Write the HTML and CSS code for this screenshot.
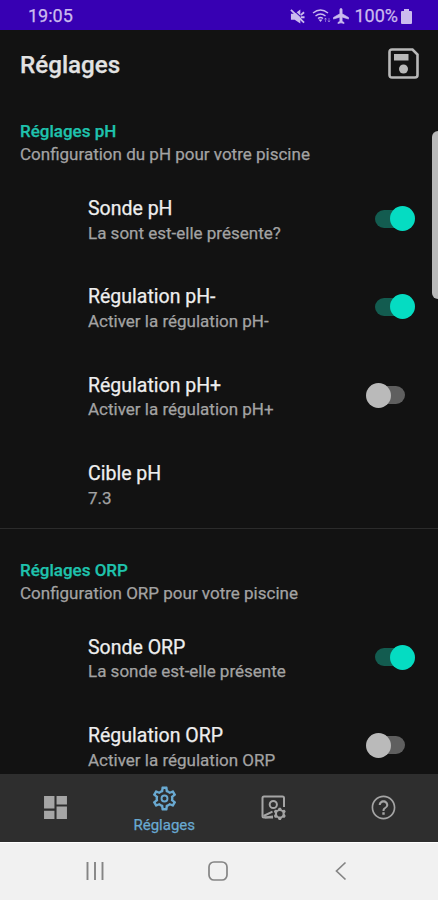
FILE: index.html
```html
<!DOCTYPE html>
<html lang="fr">
<head>
<meta charset="utf-8">
<title>Réglages</title>
<link rel="stylesheet" href="styles.css">
</head>
<body>
<div class="screen">
  <div class="status">
    <span class="clock">19:05</span>
    <div class="status-icons">
      <svg class="mute" viewBox="0 0 16 16"><path d="M1 5h4l6-4.500v15L5 11.500H1z" fill="currentColor"/><path d="M3.500 1l13 12" stroke="#3700b3" stroke-width="1.200"/><path d="M1 1l14 13.500M11.500 6.500l3.500-3M11.500 8.800h4" stroke="currentColor" stroke-width="2"/></svg>
      <svg class="wifi" viewBox="0 0 20 16"><path d="M1 5q7.500-6 15 0M3.500 8q5-4 10 0M6 10.500q2.500-2 5 0" fill="none" stroke="currentColor" stroke-width="1.400"/><path d="M6.500 11.500h4L8.500 14z" fill="currentColor"/><path d="M13.500 14v-4m-1 1.500l1-1.500 1 1.500M17 10v4m-1-1.500l1 1.500 1-1.500" fill="none" stroke="currentColor" stroke-width=".8" opacity=".6"/></svg>
      <svg class="plane" viewBox="2 1.500 20 21"><path fill="currentColor" stroke="currentColor" stroke-width=".8" d="M22 16v-2l-8.500-5V3.500C13.500 2.670 12.830 2 12 2s-1.500.67-1.500 1.500V9L2 14v2l8.500-2.500V19L8 20.500V22l4-1 4 1v-1.500L13.500 19v-5.500L22 16z"/></svg>
      <span class="percent">100%</span>
      <svg class="battery" viewBox="0 0 11 15"><path d="M3 0h5v2h2q1 0 1 1v11q0 1-1 1H1q-1 0-1-1V3q0-1 1-1h2z" fill="currentColor"/></svg>
    </div>
  </div>
  <header class="appbar">
    <h1>Réglages</h1>
    <svg class="save" viewBox="0 0 31 31"><path d="M4 1.500h20.500l5 5V27q0 2.500-2.500 2.500H4Q1.500 29.500 1.500 27V4Q1.500 1.500 4 1.500z" fill="none" stroke="currentColor" stroke-width="2.600"/><path d="M6 6h14.500v6.500H6z" fill="currentColor"/><circle cx="15.500" cy="21" r="4.500" fill="currentColor"/></svg>
  </header>
  <main class="list">
    <section class="group">
      <div class="heading"><h2>Réglages pH</h2><p>Configuration du pH pour votre piscine</p></div>
      <div class="row"><div><h3>Sonde pH</h3><p>La sont est-elle présente?</p></div><span class="switch on"></span></div>
      <div class="row"><div><h3>Régulation pH-</h3><p>Activer la régulation pH-</p></div><span class="switch on"></span></div>
      <div class="row"><div><h3>Régulation pH+</h3><p>Activer la régulation pH+</p></div><span class="switch"></span></div>
      <div class="row"><div><h3>Cible pH</h3><p>7.3</p></div></div>
    </section>
    <section class="group">
      <div class="heading"><h2>Réglages ORP</h2><p>Configuration ORP pour votre piscine</p></div>
      <div class="row"><div><h3>Sonde ORP</h3><p>La sonde est-elle présente</p></div><span class="switch on"></span></div>
      <div class="row"><div><h3>Régulation ORP</h3><p>Activer la régulation ORP</p></div><span class="switch"></span></div>
    </section>
  </main>
  <nav class="tabs">
    <div class="tab"><svg viewBox="0 0 24 24"><path fill="currentColor" d="M1 1h10v12H1zM1 15h10v8H1zM13 1h10v8H13zM13 11h10v12H13z"/></svg></div>
    <div class="tab active"><svg viewBox="1.500 1.500 21 21"><path fill="currentColor" d="M19.430 12.980c.04-.32.070-.64.070-.98 0-.34-.03-.66-.07-.98l2.110-1.650c.19-.15.24-.42.12-.64l-2-3.460c-.09-.16-.26-.25-.44-.25-.06 0-.12.010-.17.030l-2.490 1c-.52-.4-1.080-.73-1.690-.98l-.38-2.650C14.460 2.180 14.250 2 14 2h-4c-.25 0-.46.18-.49.420l-.38 2.650c-.61.25-1.170.59-1.690.98l-2.490-1c-.06-.02-.12-.03-.18-.03-.17 0-.34.090-.43.250l-2 3.460c-.13.220-.07.490.12.640l2.110 1.650c-.04.32-.07.65-.07.98 0 .33.030.66.070.98l-2.110 1.650c-.19.150-.24.420-.12.640l2 3.460c.09.160.26.250.44.250.06 0 .12-.01.17-.03l2.490-1c.52.4 1.080.73 1.690.98l.38 2.650c.03.240.24.420.49.420h4c.25 0 .46-.18.490-.42l.38-2.650c.61-.25 1.170-.59 1.690-.98l2.490 1c.06.020.12.030.18.030.17 0 .34-.09.430-.25l2-3.460c.12-.22.070-.49-.12-.64l-2.110-1.650zm-1.980-1.710c.04.310.05.520.05.730 0 .21-.02.430-.05.730l-.14 1.130.89.7 1.080.84-.7 1.210-1.270-.51-1.040-.42-.9.680c-.43.320-.84.560-1.250.730l-1.060.43-.16 1.130-.2 1.350h-1.400l-.19-1.350-.16-1.130-1.060-.43c-.43-.18-.83-.41-1.230-.71l-.91-.7-1.060.43-1.270.51-.7-1.210 1.080-.84.890-.7-.14-1.130c-.03-.31-.05-.54-.05-.74s.020-.43.050-.73l.14-1.130-.89-.7-1.080-.84.700-1.210 1.270.51 1.040.42.900-.68c.43-.32.840-.56 1.250-.73l1.060-.43.160-1.130.2-1.350h1.390l.19 1.350.16 1.130 1.060.43c.43.180.83.410 1.230.71l.91.7 1.060-.43 1.270-.51.700 1.210-1.070.85-.89.7.14 1.130z"/><circle cx="12" cy="12" r="2.500" fill="none" stroke="currentColor" stroke-width="1.600"/></svg><span>Réglages</span></div>
    <div class="tab"><svg viewBox="0 0 25 25"><g fill="none" stroke="currentColor" stroke-width="2"><path d="M12 22.500H3Q1.500 22.500 1.500 21V3Q1.500 1.500 3 1.500h18.500q1.500 0 1.500 1.500v9"/><circle cx="12.300" cy="9.500" r="3.600"/><path d="M2.500 21l9-4.300M4 22.500l8-1"/></g><path d="M19.800 12.700l1.300 2.200 2.600-.1 1 1.800-1.200 2.200 1.200 2.200-1 1.800-2.600-.1-1.300 2.200h-2l-1.300-2.200-2.600.1-1-1.800 1.200-2.200-1.200-2.200 1-1.800 2.600.1 1.300-2.200z" fill="currentColor"/><circle cx="18.800" cy="18.800" r="2.800" fill="#2e2e2e"/></svg></div>
    <div class="tab"><svg viewBox="1.500 1.500 21 21"><path fill="currentColor" d="M11 18h2v-2h-2v2zm1-16C6.480 2 2 6.480 2 12s4.480 10 10 10 10-4.480 10-10S17.520 2 12 2zm0 18.600c-4.750 0-8.600-3.850-8.600-8.600S7.250 3.400 12 3.400s8.600 3.850 8.600 8.600-3.850 8.600-8.600 8.600zM12 6c-2.210 0-4 1.790-4 4h1.700c0-1.270 1.030-2.300 2.300-2.300s2.300 1.030 2.300 2.300c0 2-3.150 1.750-3.150 5h1.700c0-2.250 3.150-2.500 3.150-5 0-2.210-1.790-4-4-4z"/></svg></div>
  </nav>
  <div class="system">
    <svg viewBox="0 0 20 20"><path d="M2.500 1v18M10 1v18M17.500 1v18" stroke="currentColor" stroke-width="1.900"/></svg>
    <svg viewBox="0 0 20 20"><rect x="1" y="1" width="18" height="18" rx="5" fill="none" stroke="currentColor" stroke-width="1.700"/></svg>
    <svg viewBox="0 0 20 20"><path d="M14.500 1.500L5.500 10l9 8.500" fill="none" stroke="currentColor" stroke-width="1.700"/></svg>
  </div>
  <span class="edge-handle"></span>
</div>
</body>
</html>
```

FILE: styles.css
```css
* { box-sizing: border-box; }
body { margin: 0; font-family: Roboto, "Liberation Sans", sans-serif; }
h1, h2, h3, p { margin: 0; }
svg { display: block; flex: none; }
.screen {
  position: relative;
  width: 438px;
  height: 900px;
  display: flex;
  flex-direction: column;
  overflow: hidden;
  background: #121212;
  -webkit-text-stroke: .25px;
}
.status {
  flex: 0 0 30px;
  display: flex;
  align-items: center;
  justify-content: space-between;
  padding: 2px 26px 0 28px;
  background: #3700b3;
  color: #cbbbee;
  font-size: 18px;
  line-height: 28px;
}
.status-icons { display: flex; align-items: center; }
.mute { width: 15px; height: 15px; }
.wifi { width: 20px; height: 16px; margin-left: 7px; }
.plane { width: 16px; height: 16px; margin-left: 1px; }
.percent { margin-left: 5px; }
.battery { width: 11px; height: 15px; margin-left: 3px; }
.appbar {
  flex: 0 0 60px;
  display: flex;
  align-items: center;
  justify-content: space-between;
  padding: 9px 19px 0 20px;
}
h1 { color: #e2e2e2; font-size: 24.200px; font-weight: 500; line-height: 32px; }
.save { width: 31px; height: 31px; color: #b8b8b8; margin-top: -2px; }
.list { flex: 1; min-height: 0; overflow: hidden; }
.group + .group { border-top: 1px solid #2b2b2b; }
.heading { height: 84px; padding: 30px 20px 0; }
.group + .group .heading { height: 84px; padding-top: 30px; }
h2 { color: #1fc3ad; font-size: 17px; font-weight: 500; line-height: 23px; }
p { color: #a3a3a3; font-size: 17px; line-height: 23px; }
.row {
  height: 88.400px;
  display: flex;
  justify-content: space-between;
  padding: 22px 23px 0 88px;
}
h3 { color: #eee; font-size: 19.500px; font-weight: 400; line-height: 25px; }
.row p { margin-top: .6px; }
.switch {
  position: relative;
  width: 30px;
  height: 18px;
  margin: 13.500px 10px 0 0;
  border-radius: 9px;
  background: #5f5f5f;
}
.switch.on { background: #135c50; }
.switch::after {
  content: "";
  position: absolute;
  left: -9px;
  top: -3.500px;
  width: 25px;
  height: 25px;
  border-radius: 50%;
  background: #bababa;
}
.switch.on::after { left: 15px; background: #05dcc2; }
.tabs {
  flex: 0 0 68px;
  display: grid;
  grid-template-columns: repeat(4, 1fr);
  background: #2e2e2e;
  color: #a5a5a5;
}
.tab { display: flex; flex-direction: column; align-items: center; padding-top: 21px; }
.tab svg { width: 25px; height: 25px; }
.tab:first-child svg { transform: translateX(1px); }
.tab.active { color: #69a9d1; padding-top: 12px; }
.tab span { margin-top: 5px; font-size: 15px; line-height: 18px; }
.system {
  flex: 0 0 58px;
  display: flex;
  justify-content: center;
  gap: 103px;
  padding: 18px 2px 0 0;
  background: #f1f1f1;
  border-top: 1px solid #fff;
  color: #858585;
}
.system svg { width: 20px; height: 20px; }
.edge-handle {
  position: absolute;
  right: -6px;
  top: 131px;
  width: 12px;
  height: 168px;
  border-radius: 6px;
  background: #b9b9b9;
}
```
